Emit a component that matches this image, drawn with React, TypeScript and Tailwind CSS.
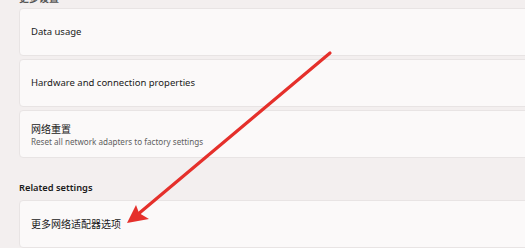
import React from "react";

const font = { fontFamily: '"Segoe UI", "Noto Sans", "Noto Sans CJK SC", sans-serif' };

const Card = ({ children }: { children: React.ReactNode }) => (
  <div className="w-[520px] h-[48px] flex flex-col justify-center pl-[11px] bg-[#fbf9f9] border border-[#e8e4e4] rounded-[4px]">
    {children}
  </div>
);

export default function App() {
  return (
    <div
      className="relative w-[525px] h-[248px] overflow-hidden bg-[#f3efef] text-[#1a1a1a]"
      style={font}
    >
      <div className="pl-[19px] pt-[8px] flex flex-col">
        <div className="h-0 overflow-visible">
          <div className="-mt-[16px] text-[10px] font-semibold leading-[12px] text-[#555]">更多设置</div>
        </div>
        <div className="flex flex-col gap-[3px]">
          <Card>
            <span className="text-[9.5px]">Data usage</span>
          </Card>
          <Card>
            <span className="text-[9.5px]">Hardware and connection properties</span>
          </Card>
          <Card>
            <span className="text-[10px] leading-[13px] pt-[2px]">网络重置</span>
            <span className="text-[8.1px] leading-[12px] text-[#5f5f5f]">
              Reset all network adapters to factory settings
            </span>
          </Card>
        </div>
        <div className="h-[42px] flex items-center pt-[18px] text-[9.3px] font-semibold">
          Related settings
        </div>
        <Card>
          <span className="text-[10px]">更多网络适配器选项</span>
        </Card>
      </div>
      <svg
        className="absolute inset-0 pointer-events-none"
        width="525"
        height="248"
        viewBox="0 0 525 248"
      >
        <line
          x1="330"
          y1="53"
          x2="137"
          y2="215"
          stroke="#e5302b"
          strokeWidth="3.2"
          strokeLinecap="round"
        />
        <path d="M127 223 L136 205 L139 213 L149 219 Z" fill="#e5302b" />
      </svg>
    </div>
  );
}
